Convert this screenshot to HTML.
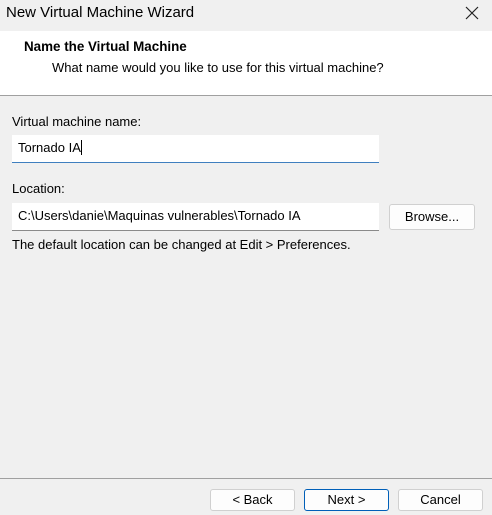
<!DOCTYPE html>
<html><head><style>
body{margin:0;width:492px;height:515px;background:#f0f0f0;font-family:"Liberation Sans",sans-serif;font-size:13px;color:#000;position:relative;overflow:hidden}
.a{position:absolute}
.inp{position:absolute;background:#fff;border-bottom:1px solid #8a8a8a;box-sizing:border-box;padding-left:6px;line-height:26px;font-size:13px}
.btn{position:absolute;background:#fdfdfd;border:1px solid #d0d0d0;border-radius:3px;box-sizing:border-box;text-align:center;font-size:13px}
</style></head><body>
<div class="a" style="left:0;top:0;width:492px;height:31px;background:#f0f0f0"></div>
<div class="a" style="left:6px;top:4px;font-size:15px">New Virtual Machine Wizard</div>
<svg class="a" style="left:465px;top:6px" width="14" height="14"><path d="M1 1L13 13M13 1L1 13" stroke="#222" stroke-width="1.2"/></svg>
<div class="a" style="left:0;top:31px;width:492px;height:64px;background:#fff;border-bottom:1px solid #a0a0a0"></div>
<div class="a" style="left:24px;top:39px;font-weight:bold;font-size:13.4px">Name the Virtual Machine</div>
<div class="a" style="left:52px;top:60px">What name would you like to use for this virtual machine?</div>
<div class="a" style="left:12px;top:114px">Virtual machine name:</div>
<div class="inp" style="left:12px;top:135px;width:367px;height:28px;border-bottom:1px solid #3f7fbf">Tornado IA<span style="display:inline-block;width:1px;height:15px;background:#000;vertical-align:-3px"></span></div>
<div class="a" style="left:12px;top:181px">Location:</div>
<div class="inp" style="left:12px;top:203px;width:367px;height:28px">C:\Users\danie\Maquinas vulnerables\Tornado IA</div>
<div class="btn" style="left:389px;top:204px;width:86px;height:26px;line-height:24px">Browse...</div>
<div class="a" style="left:12px;top:237px">The default location can be changed at Edit &gt; Preferences.</div>
<div class="a" style="left:0;top:478px;width:492px;height:1px;background:#a0a0a0"></div>
<div class="btn" style="left:210px;top:489px;width:85px;height:22px;line-height:20px">&lt; Back</div>
<div class="btn" style="left:304px;top:489px;width:85px;height:22px;line-height:20px;border-color:#005fb8">Next &gt;</div>
<div class="btn" style="left:398px;top:489px;width:85px;height:22px;line-height:20px">Cancel</div>
</body></html>
